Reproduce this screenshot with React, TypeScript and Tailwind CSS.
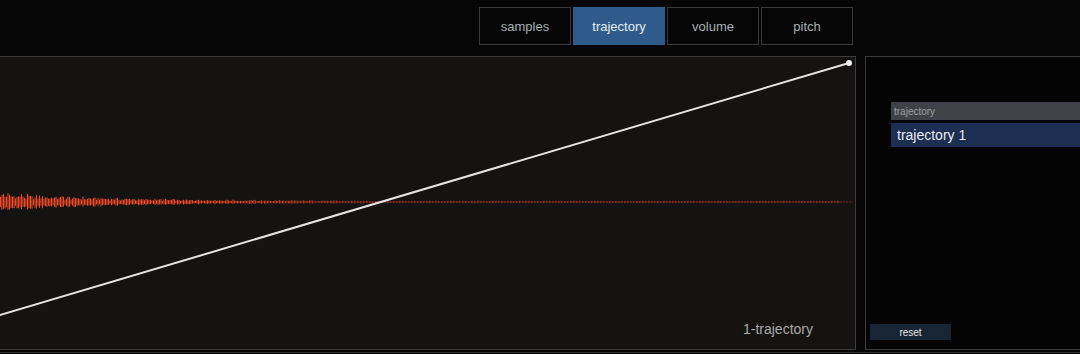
import React from "react";

const tabs = ["samples", "trajectory", "volume", "pitch"];

// deterministic noise so the waveform looks the same every render
function rand(i: number) {
  const s = Math.sin(i * 12.9898 + 78.233) * 43758.5453;
  return s - Math.floor(s);
}

function Waveform() {
  const bars: React.ReactElement[] = [];
  for (let i = 0; i < 560; i++) {
    const x = i * 1.5;
    const amp = 8 * Math.exp(-x / 100) + 1.3;
    const h = amp * (0.45 + 0.55 * rand(i));
    const up = h * (0.8 + 0.4 * rand(i + 999));
    const fade = x > 200 ? Math.max(0.35, 1 - (x - 200) / 260) : 1;
    bars.push(
      <rect
        key={i}
        x={x + 10}
        y={202 - up}
        width={1}
        height={up + h}
        fill="#f04a28"
        opacity={fade}
      />
    );
  }
  return <g>{bars}</g>;
}

function TrajectoryCanvas() {
  return (
    <div className="relative -ml-[10px] h-[294px] w-[866px] shrink-0 border border-[#3c3c3c] bg-[#141312]">
      {/* svg coords are page coords shifted by the panel's 10px overhang */}
      <svg className="absolute -left-px -top-px" width={866} height={294} viewBox="0 56 866 294">
        <line x1={10} y1={202} x2={863} y2={202} stroke="#7a2416" strokeWidth={1} strokeDasharray="2 1" />
        <Waveform />
        <line x1={0} y1={318} x2={859} y2={63} stroke="#e4e4e4" strokeWidth={2} />
        <circle cx={859} cy={63} r={3} fill="#f0f0f0" />
      </svg>
      <div className="absolute bottom-[9px] right-[42px] text-[14px] text-[#a9a9a9]">1-trajectory</div>
    </div>
  );
}

export default function App() {
  return (
    <div className="h-[354px] w-[1080px] overflow-hidden bg-[#050505] font-['Liberation_Sans',Arial,sans-serif]">
      <div className="flex h-[56px] items-start justify-end gap-[2px] pr-[227px] pt-[7px]">
        {tabs.map((t) => (
          <div
            key={t}
            className={
              t === "trajectory"
                ? "flex h-[38px] w-[92px] items-center justify-center border border-[#2e5b89] bg-[#2e5b89] pt-[2px] text-[13px] text-[#e3ebf3]"
                : "flex h-[38px] w-[92px] items-center justify-center border border-[#3a3a3a] bg-[#050505] pt-[2px] text-[13px] text-[#a8b2b2]"
            }
          >
            {t}
          </div>
        ))}
      </div>

      <div className="flex gap-[9px]">
        <TrajectoryCanvas />
        <div className="flex h-[294px] w-[240px] shrink-0 flex-col border border-[#3a3a3a] bg-[#040404] pt-[45px]">
          <div className="ml-[25px] flex h-[18px] items-center bg-[#404247] pl-[3px] text-[10px] text-[#9ea0a3]">
            trajectory
          </div>
          <div className="ml-[25px] mt-[3px] flex h-[24px] items-center bg-[#1c2e52] pl-[6px] text-[14px] text-[#e8ecf2]">
            trajectory 1
          </div>
          <div className="mt-auto mb-[9px] ml-[4px] flex h-[16px] w-[81px] items-center justify-center bg-[#172535] text-[10px] text-[#e6e6e6]">
            reset
          </div>
        </div>
      </div>
      <div className="mt-[2px] h-px bg-[#2e2e2e]" />
    </div>
  );
}
